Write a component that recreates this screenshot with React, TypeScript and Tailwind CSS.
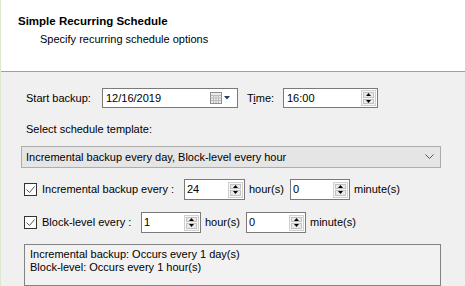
import React from 'react'

function Spinner() {
  return (
    <div className="flex flex-col gap-[1px] w-[15px] h-[16px] mr-[1px] border border-[#d0d0d0] bg-[#f7f7f7] p-[1px]">
      <div className="flex-1 flex items-center justify-center bg-[#eaeaea] border border-[#c2c2c2]">
        <svg width="5" height="3" viewBox="0 0 5 3"><path d="M2.5 0L5 3H0z" fill="#000" /></svg>
      </div>
      <div className="flex-1 flex items-center justify-center bg-[#eaeaea] border border-[#c2c2c2]">
        <svg width="5" height="3" viewBox="0 0 5 3"><path d="M0 0h5L2.5 3z" fill="#000" /></svg>
      </div>
    </div>
  )
}

function NumBox({ value, width }: { value: string; width: string }) {
  return (
    <div className={`${width} h-[21px] flex items-center bg-white border border-[#7a7a7a]`}>
      <span className="flex-1 pl-[2px] leading-[13px]">{value}</span>
      <Spinner />
    </div>
  )
}

function Check() {
  return (
    <div className="w-[13px] h-[13px] border border-[#333] bg-white flex items-center justify-center">
      <svg width="11" height="11" viewBox="0 0 11 11">
        <path d="M1.5 5.5l3 3 5-6" fill="none" stroke="#555" strokeWidth="1" />
      </svg>
    </div>
  )
}

function CalendarIcon() {
  return (
    <svg width="20" height="12" viewBox="0 0 20 12">
      <rect x="0.5" y="0.5" width="11" height="11" fill="#ececec" stroke="#8f8f8f" />
      <path d="M1 3.5h10M1 6h10M1 8.5h10M3.5 3v8M6 3v8M8.5 3v8" stroke="#bcbcbc" strokeWidth="1" />
      <path d="M14 4h6l-3 3.5z" fill="#2c3a66" />
    </svg>
  )
}

export default function App() {
  return (
    <div className="w-[465px] h-[286px] overflow-hidden flex flex-col border-l border-[#dde9cf] font-['Liberation_Sans',Arial,sans-serif] text-[11px] text-black">
      <div className="h-[72px] shrink-0 bg-white border-b border-[#a0a0a0] pl-[17px] pt-[13px]">
        <div className="font-bold text-[11.5px] leading-[16px]">Simple Recurring Schedule</div>
        <div className="pl-[22px] mt-[3px] leading-[14px]">Specify recurring schedule options</div>
      </div>

      <div className="flex-1 bg-[#f0f0f0] pl-[20px] flex flex-col">
        <div className="flex items-center mt-[16px] h-[20px]">
          <span className="w-[81px] pl-[5px]">Start backup:</span>
          <div className="w-[136px] h-[20px] flex items-center bg-white border border-[#7a7a7a]">
            <span className="flex-1 pl-[3px]">12/16/2019</span>
            <div className="mr-[7px] flex items-center"><CalendarIcon /></div>
          </div>
          <span className="ml-[9px] w-[36px]">T<span className="underline">i</span>me:</span>
          <div className="w-[95px] h-[20px] flex items-center bg-white border border-[#7a7a7a]">
            <span className="flex-1 pl-[3px]">16:00</span>
            <Spinner />
          </div>
        </div>

        <div className="mt-[14px] pl-[5px] leading-[14px]">Select schedule template:</div>

        <div className="mt-[10px] w-[420px] h-[22px] flex items-center bg-[#e5e5e5] border border-[#adadad]">
          <span className="flex-1 pl-[4px]">Incremental backup every day, Block-level every hour</span>
          <svg className="mr-[6px]" width="9" height="6" viewBox="0 0 9 6">
            <path d="M0.5 0.5l4 4 4-4" fill="none" stroke="#555" strokeWidth="1" />
          </svg>
        </div>

        <div className="mt-[11px] h-[21px] flex items-center">
          <div className="ml-[3px] mr-[5px]"><Check /></div>
          <span className="w-[142px]">Incremental backup every :</span>
          <NumBox value="24" width="w-[61px]" />
          <span className="ml-[4px] w-[41px]">hour(s)</span>
          <NumBox value="0" width="w-[60px]" />
          <span className="ml-[4px]">minute(s)</span>
        </div>

        <div className="mt-[12px] h-[21px] flex items-center">
          <div className="ml-[3px] mr-[5px]"><Check /></div>
          <span className="w-[99px]">Block-level every :</span>
          <NumBox value="1" width="w-[60px]" />
          <span className="ml-[4px] w-[41px]">hour(s)</span>
          <NumBox value="0" width="w-[60px]" />
          <span className="ml-[4px]">minute(s)</span>
        </div>

        <div className="mt-[11px] ml-[3px] w-[417px] flex-1 border border-[#828282] bg-[#f2f2f2] pl-[5px] pt-[3px] leading-[13px]">
          <div>Incremental backup: Occurs every 1 day(s)</div>
          <div>Block-level: Occurs every 1 hour(s)</div>
        </div>
      </div>
    </div>
  )
}
